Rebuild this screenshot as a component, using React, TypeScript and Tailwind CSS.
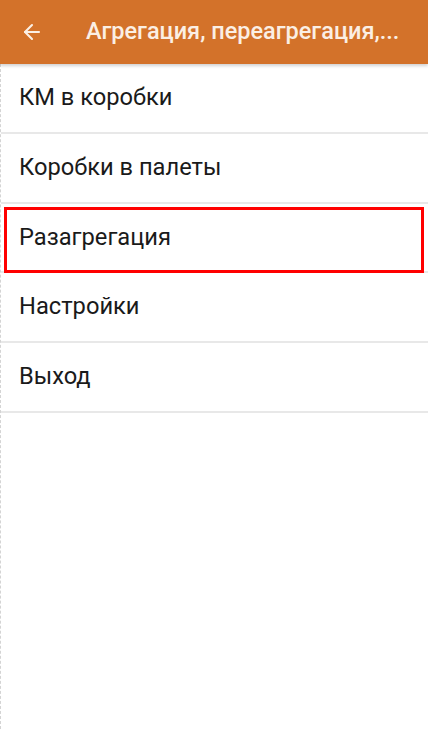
import { ArrowLeft } from 'lucide-react'

const items = ['КМ в коробки', 'Коробки в палеты', 'Разагрегация', 'Настройки', 'Выход']

export default function App() {
  return (
    <div className="w-[428px] h-[729px] bg-white flex flex-col overflow-hidden" style={{ fontFamily: 'Roboto, "Noto Sans", sans-serif' }}>
      <header className="relative z-10 h-16 shrink-0 bg-[#d3722a] flex items-center shadow-[0_2px_3px_rgba(0,0,0,0.18)]">
        <div className="w-[86px] pl-[20px] flex items-center">
          <ArrowLeft className="w-[24px] h-[24px] text-[#fbefe4]" strokeWidth={2.1} />
        </div>
        <h1 className="flex-1 text-[23.5px] font-medium text-[#fbefe4] whitespace-nowrap">
          Агрегация, переагрегация,...
        </h1>
      </header>
      <main className="flex-1 border-l border-dashed border-[#d4d4d4]">
        {items.map((item, i) => (
          <div
            key={item}
            className="relative h-[69.75px] flex items-center pl-[18px] border-b-2 border-[#e8e8e8] text-[23.7px] text-[#1a1a1a]"
          >
            {item}
            {i === 2 && (
              <div className="absolute left-[3px] right-[4px] top-[3px] bottom-[-2px] border-[3px] border-[#ff0000]" />
            )}
          </div>
        ))}
      </main>
    </div>
  )
}
